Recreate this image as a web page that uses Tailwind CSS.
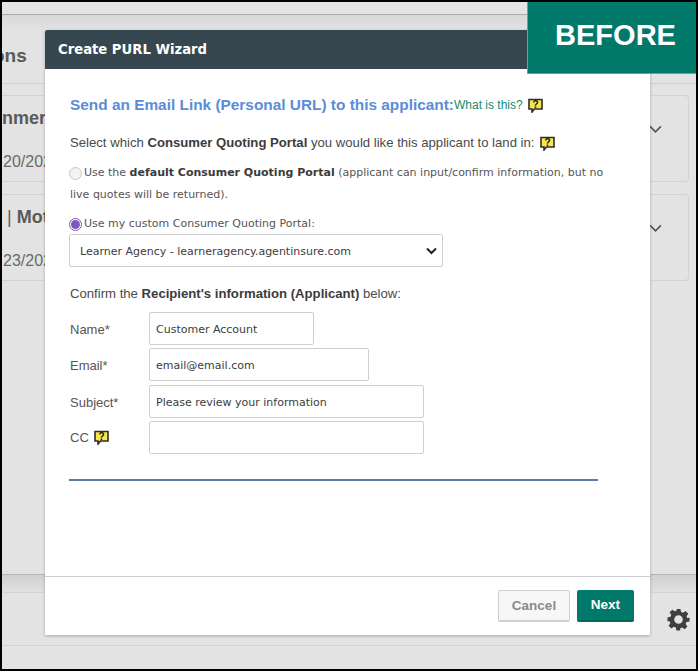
<!DOCTYPE html>
<html lang="en">
<head>
<meta charset="utf-8">
<title>Create PURL Wizard</title>
<script src="https://cdn.jsdelivr.net/npm/@tailwindcss/browser@4"></script>
</head>
<body class="m-0">
  <div class="relative w-[698px] h-[671px] overflow-hidden border-2 border-black bg-[#e3e3e3] font-['Liberation_Sans',sans-serif]">

    <!-- Page behind the modal -->
    <div class="h-[12px] border-b border-[#ababab] box-content bg-[#e4e4e4]"></div>
    <div class="h-[16px] bg-gradient-to-b from-[#d8d8d8] to-[#e3e3e3]"></div>
    <div class="flex h-[53px] items-center border-b border-[#d0d0d0] text-[19px] font-bold text-[#5a5a5a]">
      <span class="ml-[-9px] mt-[-1px]">ons</span>
    </div>
    <div class="mt-[11px] flex flex-col gap-[12px] pr-[7px]">
      <div class="flex h-[87px] rounded-r-[4px] border border-l-0 border-[#d2d2d2]">
        <div class="flex-1 pt-[10px] overflow-hidden">
          <div class="text-[18px] font-bold text-[#5a5a5a] leading-[24px]">nmercial</div>
          <div class="mt-[22px] ml-[1px] text-[16px] text-[#6a6a6a] leading-[20px]">20/2021</div>
        </div>
        <svg class="mt-[29px] mr-[26px]" width="13" height="9" viewBox="0 0 14 10" fill="none" stroke="#555" stroke-width="1.800"><path d="M1 1.500 7 7.500 13 1.500"/></svg>
      </div>
      <div class="flex h-[87px] rounded-r-[4px] border border-l-0 border-[#d2d2d2]">
        <div class="flex-1 pt-[10px] overflow-hidden">
          <div class="ml-[-6px] text-[18px] font-bold text-[#5a5a5a] leading-[24px]"><span class="font-normal">) | </span>Motor</div>
          <div class="mt-[22px] ml-[1px] text-[16px] text-[#6a6a6a] leading-[20px]">23/2021</div>
        </div>
        <svg class="mt-[29px] mr-[26px]" width="13" height="9" viewBox="0 0 14 10" fill="none" stroke="#555" stroke-width="1.800"><path d="M1 1.500 7 7.500 13 1.500"/></svg>
      </div>
    </div>
    <div class="mt-[293px] h-[18px] border-t border-[#b5b5b5] bg-gradient-to-b from-[#d0d0d0] to-[#e0e0e0]"></div>
    <div class="flex h-[54px] items-center justify-end border-t border-b border-[#d3d3d3] pr-[6px]">
      <svg width="23" height="23" viewBox="0 0 24 24" fill="#3f3f3f"><path fill-rule="evenodd" d="M10 1h4l.7 3.200 2 .8 2.700-1.800 2.800 2.800-1.800 2.700.8 2L23.500 10v4l-3.200.7-.8 2 1.800 2.700-2.800 2.800-2.700-1.800-2 .8L13.800 23.500h-4l-.6-3.200-2-.8-2.700 1.800-2.800-2.800 1.800-2.700-.8-2L.5 13.800v-4l3.200-.6.8-2-1.800-2.700 2.800-2.800 2.700 1.800 2-.8zM12 7.500a4.500 4.500 0 1 0 0 9 4.500 4.500 0 0 0 0-9z"/></svg>
    </div>

    <!-- BEFORE badge -->
    <div class="absolute right-[-1px] top-[-1px] z-20 flex h-[73px] w-[170px] items-center justify-center border-b border-l border-[#5fa89c] bg-[#00796b] pb-[3px] pl-[6px] text-[29px] font-bold text-white">BEFORE</div>

    <!-- Modal -->
    <div class="absolute left-[43px] top-[28px] z-10 flex h-[605px] w-[605px] flex-col bg-white shadow-[0_1px_3px_rgba(0,0,0,0.25)]">
      <div class="flex h-[39px] items-center rounded-t-[2px] bg-[#37474f] pl-[13px] pt-[1px] font-['DejaVu_Sans',sans-serif] text-[13.200px] font-bold text-white">Create PURL Wizard</div>

      <div class="flex-1 pl-[24px] pr-[24px] text-[#4a4a4a]">
        <div class="mt-[26px] flex items-center pl-[1px]">
          <span class="text-[15.400px] font-bold leading-[20px] text-[#5b8dd6]">Send an Email Link (Personal URL) to this applicant:</span>
          <span class="text-[12px] leading-[20px] text-[#17896f]">What is this?</span>
          <svg class="ml-[5px]" width="15" height="15" viewBox="0 0 15 15"><path d="M1 1.500h13v9.500H6.500L4 14V11H1z" fill="#f9e64f" stroke="#2e2e2e" stroke-width="1.600"/><text x="7.500" y="9.800" font-size="10" font-weight="700" font-family="Liberation Sans" text-anchor="middle" fill="#111">?</text></svg>
        </div>

        <div class="mt-[19px] flex items-center pl-[1px] text-[13.150px] leading-[18px]">
          <span>Select which <b class="font-semibold text-[#3b3b3b]">Consumer Quoting Portal</b> you would like this applicant to land in:</span>
          <svg class="ml-[5px] mt-[1px]" width="15" height="15" viewBox="0 0 15 15"><path d="M1 1.500h13v9.500H6.500L4 14V11H1z" fill="#f9e64f" stroke="#2e2e2e" stroke-width="1.600"/><text x="7.500" y="9.800" font-size="10" font-weight="700" font-family="Liberation Sans" text-anchor="middle" fill="#111">?</text></svg>
        </div>

        <div class="mt-[10px] font-['DejaVu_Sans',sans-serif] text-[11px] leading-[22px] text-[#555]">
          <div class="flex items-center">
            <span class="mr-[2px] h-[13px] w-[13px] rounded-full border border-[#c9c9c9] bg-[#f3f3f3]"></span>
            <span>Use the <b class="text-[#3b3b3b]">default Consumer Quoting Portal</b> (applicant can input/confirm information, but no</span>
          </div>
          <div class="pl-[1px]">live quotes will be returned).</div>
          <div class="mt-[7px] flex items-center">
            <span class="mr-[2px] flex h-[13px] w-[13px] items-center justify-center rounded-full border border-[#7e57c2] bg-white"><span class="h-[9px] w-[9px] rounded-full bg-[#7e57c2]"></span></span>
            <span>Use my custom Consumer Quoting Portal:</span>
          </div>
        </div>

        <div class="mt-[-1px] flex h-[33px] w-[374px] items-center justify-between rounded-[2px] border border-[#cfcfcf] pl-[10px] pr-[5px] font-['DejaVu_Sans',sans-serif] text-[11px] text-[#3c3c3c]">
          <span class="pt-[4px]">Learner Agency - learneragency.agentinsure.com</span>
          <svg width="11" height="8" viewBox="0 0 11 8" fill="none" stroke="#222" stroke-width="2"><path d="M1 1.500 5.500 6 10 1.500"/></svg>
        </div>

        <div class="mt-[18px] pl-[1px] text-[13.150px] leading-[18px]">Confirm the <b class="font-semibold text-[#3b3b3b]">Recipient's information (Applicant)</b> below:</div>

        <div class="mt-[9px] grid grid-cols-[80px_1fr] items-center gap-y-[3px] pl-[1px] text-[13px] text-[#555]">
          <span class="pt-[2px]">Name*</span>
          <div class="ml-[-1px] flex h-[33px] w-[165px] items-center rounded-[2px] border border-[#cfcfcf] pl-[6px] pt-[4px] font-['DejaVu_Sans',sans-serif] text-[11px] text-[#3c3c3c]">Customer Account</div>
          <span class="pt-[2px]">Email*</span>
          <div class="ml-[-1px] flex h-[33px] w-[220px] items-center rounded-[2px] border border-[#cfcfcf] pl-[6px] pt-[4px] font-['DejaVu_Sans',sans-serif] text-[11px] text-[#3c3c3c]">email@email.com</div>
          <span class="mt-[1px] pt-[2px]">Subject*</span>
          <div class="ml-[-1px] mt-[1px] flex h-[33px] w-[275px] items-center rounded-[2px] border border-[#cfcfcf] pl-[6px] pt-[4px] font-['DejaVu_Sans',sans-serif] text-[11px] text-[#3c3c3c]">Please review your information</div>
          <span class="flex items-center gap-[5px]">CC
            <svg width="15" height="15" viewBox="0 0 15 15"><path d="M1 1.500h13v9.500H6.500L4 14V11H1z" fill="#f9e64f" stroke="#2e2e2e" stroke-width="1.600"/><text x="7.500" y="9.800" font-size="10" font-weight="700" font-family="Liberation Sans" text-anchor="middle" fill="#111">?</text></svg>
          </span>
          <div class="ml-[-1px] h-[33px] w-[275px] rounded-[2px] border border-[#cfcfcf]"></div>
        </div>

        <div class="mt-[25px] h-[2px] w-[529px] bg-[#5d7a9e]"></div>
      </div>

      <div class="flex h-[59px] items-start justify-end gap-[7px] border-t border-[#cfcfcf] pr-[16px] pt-[13px]">
        <div class="flex h-[32px] w-[72px] items-center justify-center rounded-[2px] border border-[#d0d0d0] border-b-2 bg-[#f7f7f7] pt-[1px] text-[13.500px] font-bold text-[#8a8a8a]">Cancel</div>
        <div class="flex h-[32px] w-[57px] items-center justify-center rounded-[2px] border-b-2 border-[#00695c] bg-[#00796b] pt-[1px] text-[13.500px] font-bold text-white">Next</div>
      </div>
    </div>
  </div>
</body>
</html>
